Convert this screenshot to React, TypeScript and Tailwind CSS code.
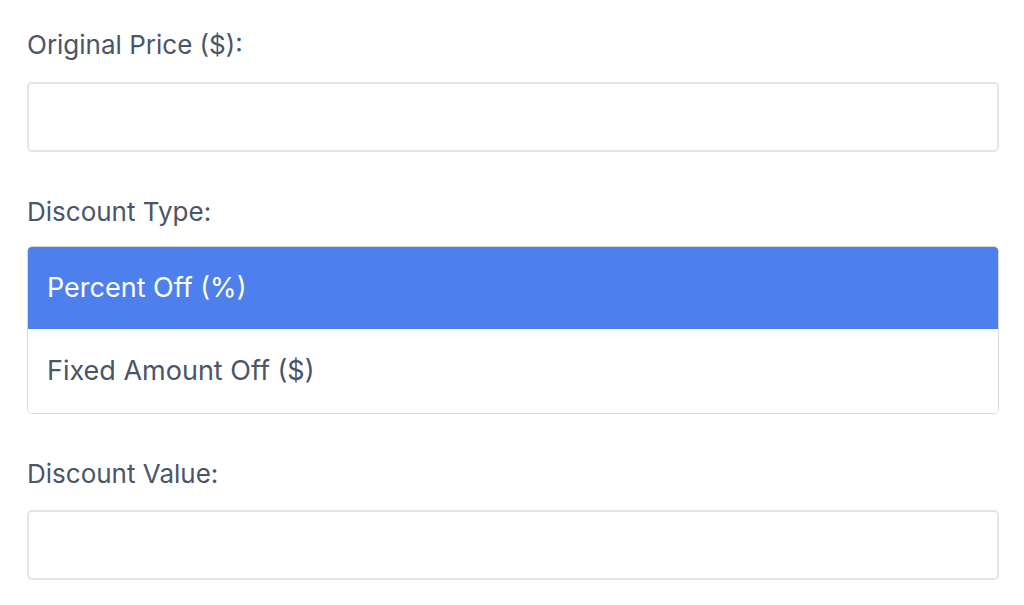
export default function App() {
  return (
    <div className="min-h-[605px] bg-white pl-[27px] pr-[25px] pt-[29px] font-['Inter',sans-serif] text-[#4a5568]">
      <label className="block text-[26px] leading-[32px]">Original Price ($):</label>
      <div className="mt-[21px] h-[70px] rounded-[5px] border-2 border-[#e2e5ec] bg-white" />

      <label className="mt-[44px] block text-[26px] leading-[32px]">Discount Type:</label>
      <div className="mt-[18px] overflow-hidden rounded-[5px] border border-[#d9d9d9]">
        <div className="flex h-[82px] items-center bg-[#4d80ec] px-[19px] text-[27px] text-white">
          Percent Off (%)
        </div>
        <div className="flex h-[84px] items-center bg-white px-[19px] text-[27px] text-[#4a5568]">
          Fixed Amount Off ($)
        </div>
      </div>

      <label className="mt-[44px] block text-[26px] leading-[32px]">Discount Value:</label>
      <div className="mt-[20px] h-[70px] rounded-[5px] border-2 border-[#e2e5ec] bg-white" />
    </div>
  );
}
